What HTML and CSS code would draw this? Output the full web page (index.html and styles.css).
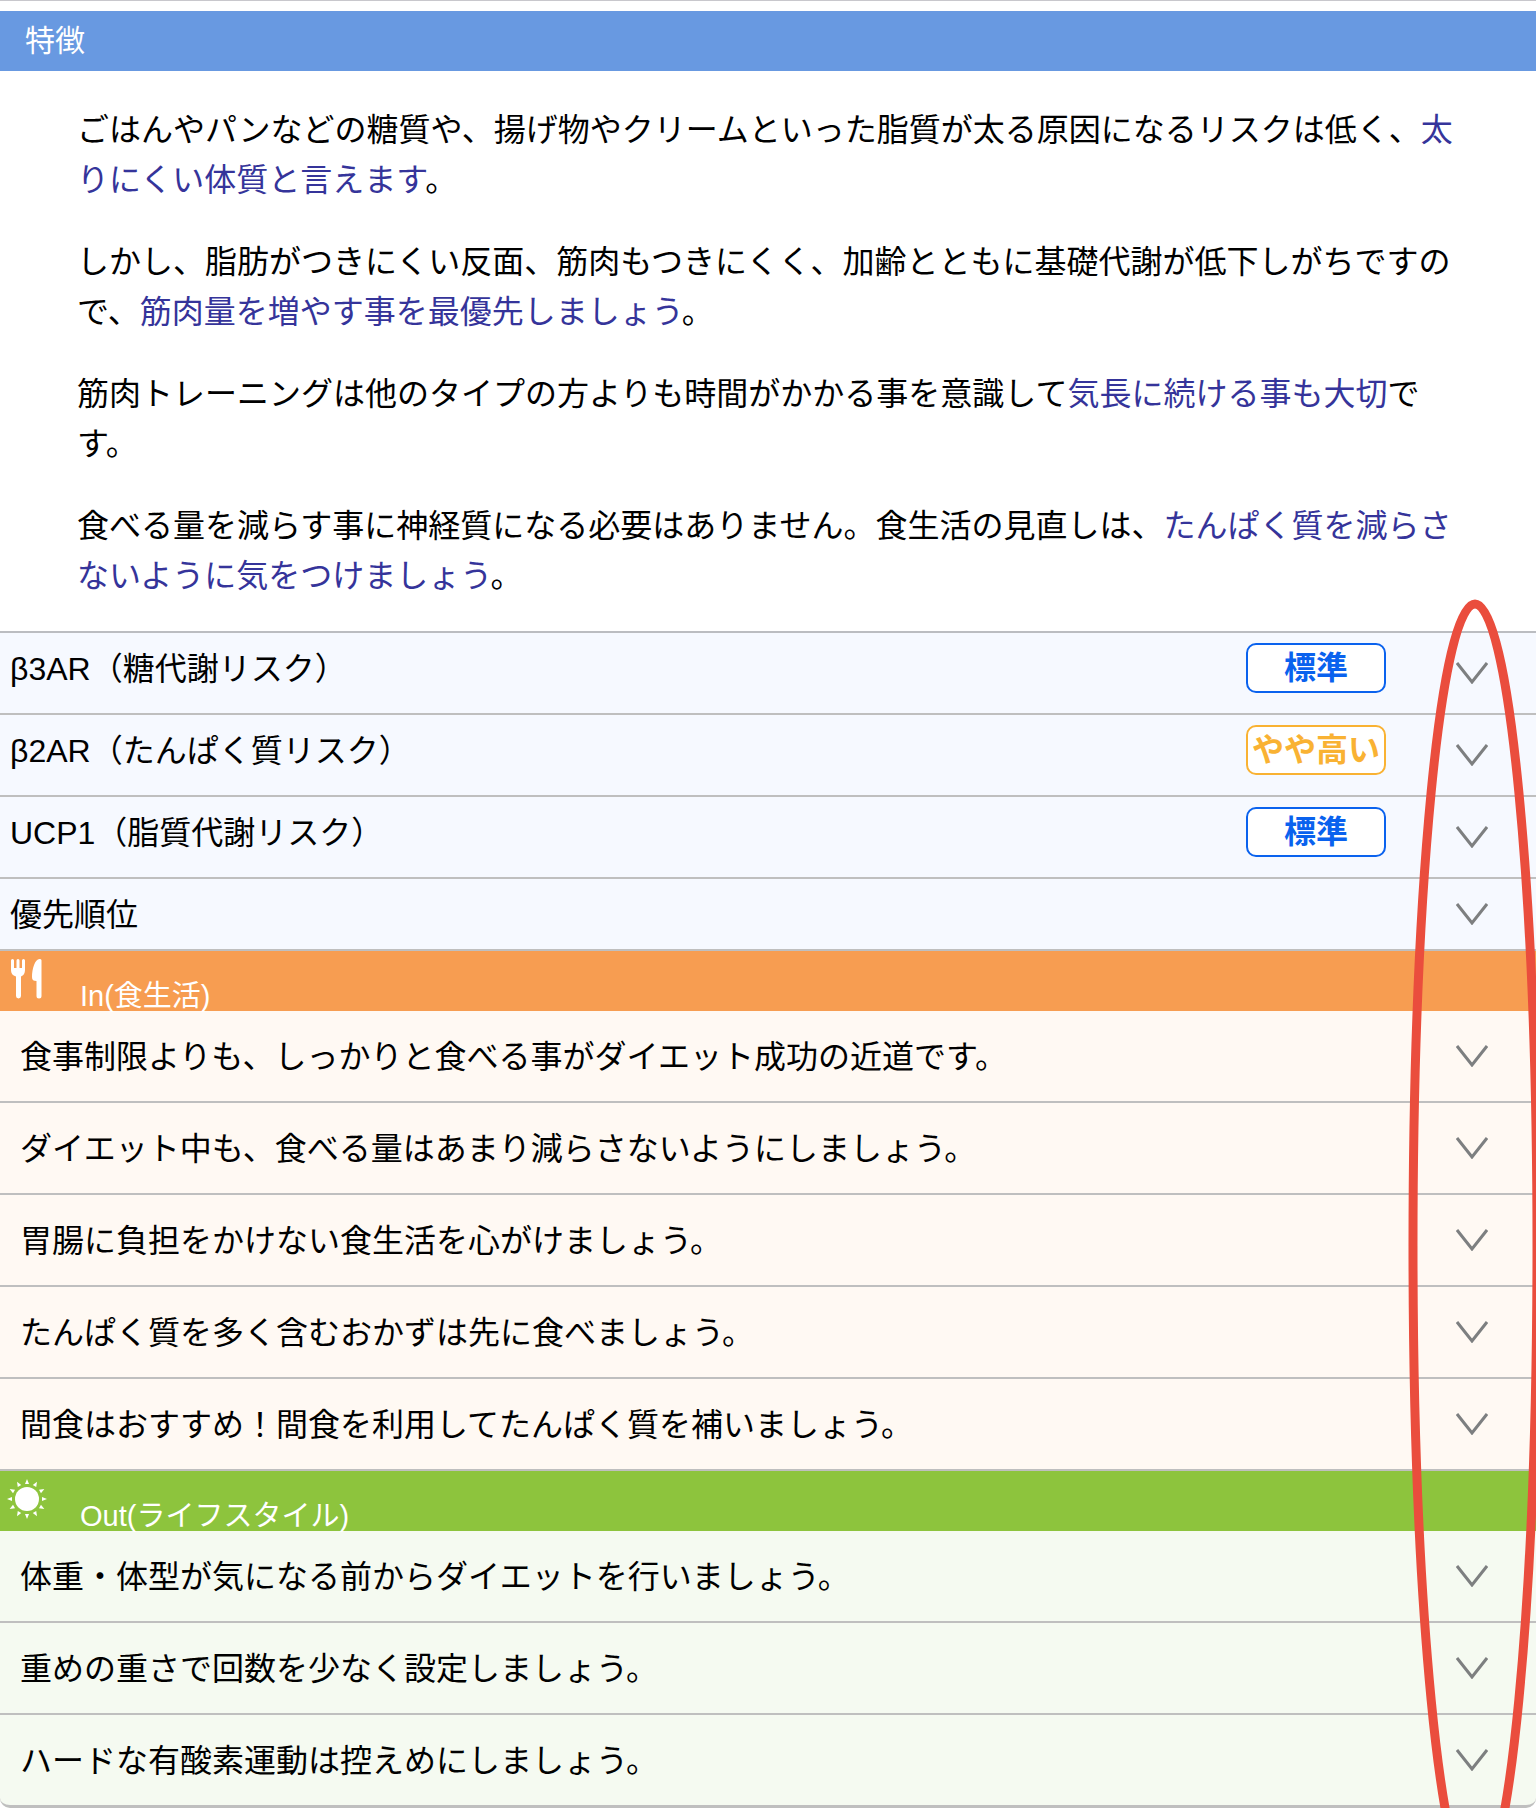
FILE: index.html
```html
<!DOCTYPE html>
<html lang="ja">
<head>
    <meta charset="UTF-8">
    <title>特徴</title>
    <link rel="stylesheet" href="styles.css">
</head>
<body>
    <svg class="defs" width="0" height="0">
        <symbol id="arrow" viewBox="0 0 32 22">
            <path d="M1 1 L16 20 L31 1" fill="none" stroke="#7d7f80" stroke-width="3"/>
        </symbol>
    </svg>

    <div class="container">
        <h2 class="heading heading-feature">特徴</h2>

        <div class="feature">
            <p>ごはんやパンなどの糖質や、揚げ物やクリームといった脂質が太る原因になるリスクは低く、<span class="point">太りにくい体質と言えます</span>。</p>
            <p>しかし、脂肪がつきにくい反面、筋肉もつきにくく、加齢とともに基礎代謝が低下しがちですので、<span class="point">筋肉量を増やす事を最優先しましょう</span>。</p>
            <p>筋肉トレーニングは他のタイプの方よりも時間がかかる事を意識して<span class="point">気長に続ける事も大切</span>です。</p>
            <p>食べる量を減らす事に神経質になる必要はありません。食生活の見直しは、<span class="point">たんぱく質を減らさないように気をつけましょう</span>。</p>
        </div>

        <div class="list list-gene">
            <button class="row" type="button">
                <span class="label">β3AR（糖代謝リスク）</span>
                <span class="badge badge-normal">標準</span>
                <svg class="arrow"><use href="#arrow"/></svg>
            </button>
            <button class="row" type="button">
                <span class="label">β2AR（たんぱく質リスク）</span>
                <span class="badge badge-high">やや高い</span>
                <svg class="arrow"><use href="#arrow"/></svg>
            </button>
            <button class="row" type="button">
                <span class="label">UCP1（脂質代謝リスク）</span>
                <span class="badge badge-normal">標準</span>
                <svg class="arrow"><use href="#arrow"/></svg>
            </button>
            <button class="row row-short" type="button">
                <span class="label">優先順位</span>
                <svg class="arrow"><use href="#arrow"/></svg>
            </button>
        </div>

        <h2 class="heading heading-in">
            <svg class="icon" viewBox="0 0 40 40" fill="#fff">
                <path d="M4 1.500a1.500 1.500 0 0 1 3 0V9h2.500V1.500a1.500 1.500 0 0 1 3 0V9H15V1.500a1.500 1.500 0 0 1 3 0V11c0 3.500-1.500 5.500-4 6.500V37a2.500 2.500 0 0 1-5 0V17.500c-3.500-1-5-3-5-6.500z"/>
                <path d="M34.500 1.500V37a2.500 2.500 0 0 1-5 0V22c-3 0-4.500-1-4.500-4C25 10 28 0 32.500 0c1.300 0 2 .5 2 1.500z"/>
            </svg>
            <span>In(食生活)</span>
        </h2>
        <div class="list list-in">
            <button class="row" type="button"><span class="label">食事制限よりも、しっかりと食べる事がダイエット成功の近道です。</span><svg class="arrow"><use href="#arrow"/></svg></button>
            <button class="row" type="button"><span class="label">ダイエット中も、食べる量はあまり減らさないようにしましょう。</span><svg class="arrow"><use href="#arrow"/></svg></button>
            <button class="row" type="button"><span class="label">胃腸に負担をかけない食生活を心がけましょう。</span><svg class="arrow"><use href="#arrow"/></svg></button>
            <button class="row" type="button"><span class="label">たんぱく質を多く含むおかずは先に食べましょう。</span><svg class="arrow"><use href="#arrow"/></svg></button>
            <button class="row" type="button"><span class="label">間食はおすすめ！間食を利用してたんぱく質を補いましょう。</span><svg class="arrow"><use href="#arrow"/></svg></button>
        </div>

        <h2 class="heading heading-out">
            <svg class="icon" viewBox="0 0 40 40" fill="#fff">
                <defs><path id="ray" d="M18 5 L20 0 L22 5z"/></defs>
                <circle cx="20" cy="20" r="12"/>
                <use href="#ray"/>
                <use href="#ray" transform="rotate(30 20 20)"/>
                <use href="#ray" transform="rotate(60 20 20)"/>
                <use href="#ray" transform="rotate(90 20 20)"/>
                <use href="#ray" transform="rotate(120 20 20)"/>
                <use href="#ray" transform="rotate(150 20 20)"/>
                <use href="#ray" transform="rotate(180 20 20)"/>
                <use href="#ray" transform="rotate(210 20 20)"/>
                <use href="#ray" transform="rotate(240 20 20)"/>
                <use href="#ray" transform="rotate(270 20 20)"/>
                <use href="#ray" transform="rotate(300 20 20)"/>
                <use href="#ray" transform="rotate(330 20 20)"/>
            </svg>
            <span>Out(ライフスタイル)</span>
        </h2>
        <div class="list list-out">
            <button class="row" type="button"><span class="label">体重・体型が気になる前からダイエットを行いましょう。</span><svg class="arrow"><use href="#arrow"/></svg></button>
            <button class="row" type="button"><span class="label">重めの重さで回数を少なく設定しましょう。</span><svg class="arrow"><use href="#arrow"/></svg></button>
            <button class="row" type="button"><span class="label">ハードな有酸素運動は控えめにしましょう。</span><svg class="arrow"><use href="#arrow"/></svg></button>
        </div>

        <!-- 開閉ボタンを囲む赤丸 -->
        <svg class="marker" viewBox="0 0 134 1294">
            <ellipse cx="67" cy="647" rx="62" ry="642" fill="none" stroke="#ea4d3d" stroke-width="9"/>
        </svg>
    </div>
</body>
</html>
```

FILE: styles.css
```css
body {
    margin: 0;
    background-color: #fff;
    color: #000;
    font-family: "Liberation Sans", "Noto Sans CJK JP", sans-serif;
    font-size: 32px;
    line-height: 50px;
}
.defs {
    position: absolute;
}
.container {
    position: relative;
    overflow: hidden;
    border-top: 1px solid #c8c7cc;
    padding-top: 10px;
}
.heading {
    display: flex;
    box-sizing: border-box;
    height: 60px;
    margin: 0;
    color: #fff;
    font-size: 30px;
    font-weight: normal;
}
.heading-feature {
    align-items: center;
    padding: 0 25px;
    background: #6899e1;
}
.heading-in,
.heading-out {
    align-items: flex-start;
    gap: 33px;
    padding: 8px 7px 0;
    font-size: 29px;
    line-height: 74px;
}
.heading-in {
    background: #f79d51;
}
.heading-out {
    background: #8dc43d;
}
.icon {
    width: 40px;
    height: 40px;
}
.feature {
    padding: 34px 77px 30px;
}
.feature p {
    margin: 0 0 32px;
}
.feature p:last-child {
    margin-bottom: 0;
}
.point {
    color: #35349a;
}
.list-gene {
    border-top: 2px solid #bbbdc1;
    background: #f6f9ff;
}
.list-in {
    background: #fff9f3;
}
.list-out {
    background: #f5faf1;
    border-radius: 0 0 10px 10px;
}
.row {
    display: flex;
    align-items: center;
    box-sizing: border-box;
    width: 100%;
    height: 92px;
    margin: 0;
    padding: 0 48px 0 20px;
    border: none;
    border-bottom: 2px solid #bfbfbf;
    background: none;
    color: inherit;
    font: inherit;
    text-align: left;
    cursor: pointer;
}
.list-gene .row {
    height: 82px;
    padding-left: 10px;
}
.list-gene .row-short {
    height: 72px;
}
.list-out .row:last-child {
    height: 93px;
    border-bottom-width: 3px;
    border-radius: 0 0 10px 10px;
}
.label {
    flex: 1;
    padding-top: 2px;
}
.list-gene .label,
.badge {
    margin-bottom: 10px;
}
.list-gene .row-short .label {
    margin-bottom: 0;
}
.badge {
    box-sizing: border-box;
    width: 140px;
    height: 50px;
    margin-right: 70px;
    border: 2px solid;
    border-radius: 10px;
    background: #fff;
    font-weight: bold;
    line-height: 46px;
    text-align: center;
    white-space: nowrap;
}
.badge-normal {
    color: #0a62ee;
}
.badge-high {
    color: #f9b233;
}
.arrow {
    width: 32px;
    height: 22px;
}
.marker {
    position: absolute;
    top: 598px;
    right: -6px;
    width: 134px;
    height: 1294px;
    pointer-events: none;
}
```
